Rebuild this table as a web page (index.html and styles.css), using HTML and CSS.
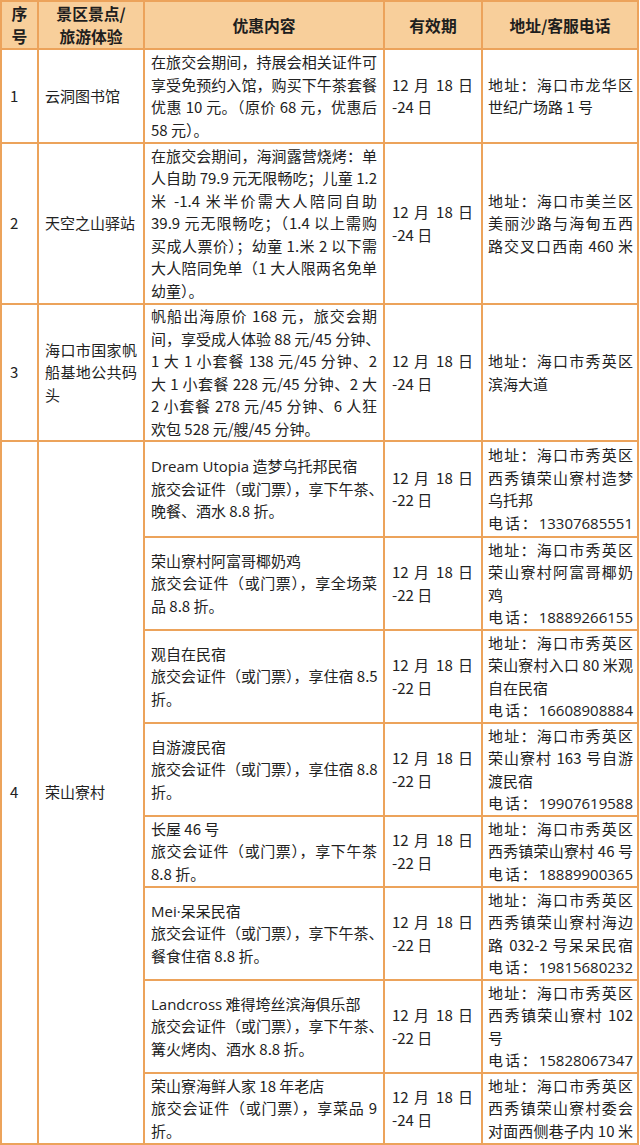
FILE: index.html
```html
<!DOCTYPE html>
<html lang="zh-CN">
<head>
<meta charset="utf-8">
<title>旅交会优惠</title>
<link rel="stylesheet" href="styles.css">
</head>
<body>
<div class="sheet">
  <div class="cell head"><div>序</div><div>号</div></div>
  <div class="cell head"><div>景区景点/</div><div>旅游体验</div></div>
  <div class="cell head"><div>优惠内容</div></div>
  <div class="cell head"><div>有效期</div></div>
  <div class="cell head"><div>地址/客服电话</div></div>

  <div class="cell num"><div>1</div></div>
  <div class="cell name"><div>云洞图书馆</div></div>
  <div class="cell offer">
    <div class="j">在旅交会期间，持展会相关证件可</div>
    <div class="j">享受免预约入馆，购买下午茶套餐</div>
    <div class="j">优惠 10 元。（原价 68 元，优惠后</div>
    <div>58 元）。</div>
  </div>
  <div class="cell date"><div class="j">12 月 18 日</div><div>-24 日</div></div>
  <div class="cell addr"><div class="j">地址：海口市龙华区</div><div>世纪广场路 1 号</div></div>

  <div class="cell num"><div>2</div></div>
  <div class="cell name"><div>天空之山驿站</div></div>
  <div class="cell offer">
    <div class="j">在旅交会期间，海涧露营烧烤：单</div>
    <div class="j">人自助 79.9 元无限畅吃；儿童 1.2</div>
    <div class="j">米 -1.4 米半价需大人陪同自助</div>
    <div class="j">39.9 元无限畅吃；（1.4 以上需购</div>
    <div class="j">买成人票价）；幼童 1.米 2 以下需</div>
    <div class="j">大人陪同免单（1 大人限两名免单</div>
    <div>幼童）。</div>
  </div>
  <div class="cell date"><div class="j">12 月 18 日</div><div>-24 日</div></div>
  <div class="cell addr">
    <div class="j">地址：海口市美兰区</div>
    <div class="j">美丽沙路与海甸五西</div>
    <div class="j">路交叉口西南 460 米</div>
  </div>

  <div class="cell num"><div>3</div></div>
  <div class="cell name"><div class="j">海口市国家帆</div><div class="j">船基地公共码</div><div>头</div></div>
  <div class="cell offer">
    <div class="j">帆船出海原价 168 元，旅交会期</div>
    <div class="j">间，享受成人体验 88 元/45 分钟、</div>
    <div class="j">1 大 1 小套餐 138 元/45 分钟、2</div>
    <div class="j">大 1 小套餐 228 元/45 分钟、2 大</div>
    <div class="j">2 小套餐 278 元/45 分钟、6 人狂</div>
    <div>欢包 528 元/艘/45 分钟。</div>
  </div>
  <div class="cell date"><div class="j">12 月 18 日</div><div>-24 日</div></div>
  <div class="cell addr"><div class="j">地址：海口市秀英区</div><div>滨海大道</div></div>

  <div class="cell num span8"><div>4</div></div>
  <div class="cell name span8"><div>荣山寮村</div></div>

  <div class="cell offer">
    <div><span class="lat">Dream Utopia</span> 造梦乌托邦民宿</div>
    <div class="j">旅交会证件（或门票），享下午茶、</div>
    <div>晚餐、酒水 8.8 折。</div>
  </div>
  <div class="cell date"><div class="j">12 月 18 日</div><div>-22 日</div></div>
  <div class="cell addr">
    <div class="j">地址：海口市秀英区</div>
    <div class="j">西秀镇荣山寮村造梦</div>
    <div>乌托邦</div>
    <div class="j">电话：<span class="lat">13307685551</span></div>
  </div>

  <div class="cell offer">
    <div>荣山寮村阿富哥椰奶鸡</div>
    <div class="j">旅交会证件（或门票），享全场菜</div>
    <div>品 8.8 折。</div>
  </div>
  <div class="cell date"><div class="j">12 月 18 日</div><div>-22 日</div></div>
  <div class="cell addr">
    <div class="j">地址：海口市秀英区</div>
    <div class="j">荣山寮村阿富哥椰奶</div>
    <div>鸡</div>
    <div class="j">电话：<span class="lat">18889266155</span></div>
  </div>

  <div class="cell offer">
    <div>观自在民宿</div>
    <div class="j">旅交会证件（或门票），享住宿 8.5</div>
    <div>折。</div>
  </div>
  <div class="cell date"><div class="j">12 月 18 日</div><div>-22 日</div></div>
  <div class="cell addr">
    <div class="j">地址：海口市秀英区</div>
    <div class="j">荣山寮村入口 80 米观</div>
    <div>自在民宿</div>
    <div class="j">电话：<span class="lat">16608908884</span></div>
  </div>

  <div class="cell offer">
    <div>自游渡民宿</div>
    <div class="j">旅交会证件（或门票），享住宿 8.8</div>
    <div>折。</div>
  </div>
  <div class="cell date"><div class="j">12 月 18 日</div><div>-22 日</div></div>
  <div class="cell addr">
    <div class="j">地址：海口市秀英区</div>
    <div class="j">荣山寮村 163 号自游</div>
    <div>渡民宿</div>
    <div class="j">电话：<span class="lat">19907619588</span></div>
  </div>

  <div class="cell offer">
    <div>长屋 46 号</div>
    <div class="j">旅交会证件（或门票），享下午茶</div>
    <div>8.8 折。</div>
  </div>
  <div class="cell date"><div class="j">12 月 18 日</div><div>-22 日</div></div>
  <div class="cell addr">
    <div class="j">地址：海口市秀英区</div>
    <div class="j">西秀镇荣山寮村 46 号</div>
    <div class="j">电话：<span class="lat">18889900365</span></div>
  </div>

  <div class="cell offer">
    <div><span class="lat">Mei·</span>呆呆民宿</div>
    <div class="j">旅交会证件（或门票），享下午茶、</div>
    <div>餐食住宿 8.8 折。</div>
  </div>
  <div class="cell date"><div class="j">12 月 18 日</div><div>-22 日</div></div>
  <div class="cell addr">
    <div class="j">地址：海口市秀英区</div>
    <div class="j">西秀镇荣山寮村海边</div>
    <div class="j">路 032-2 号呆呆民宿</div>
    <div class="j">电话：<span class="lat">19815680232</span></div>
  </div>

  <div class="cell offer">
    <div><span class="lat">Landcross</span> 难得垮丝滨海俱乐部</div>
    <div class="j">旅交会证件（或门票），享下午茶、</div>
    <div>篝火烤肉、酒水 8.8 折。</div>
  </div>
  <div class="cell date"><div class="j">12 月 18 日</div><div>-22 日</div></div>
  <div class="cell addr">
    <div class="j">地址：海口市秀英区</div>
    <div class="j">西秀镇荣山寮村 102</div>
    <div>号</div>
    <div class="j">电话：<span class="lat">15828067347</span></div>
  </div>

  <div class="cell offer">
    <div>荣山寮海鲜人家 18 年老店</div>
    <div class="j">旅交会证件（或门票），享菜品 9</div>
    <div>折。</div>
  </div>
  <div class="cell date"><div class="j">12 月 18 日</div><div>-24 日</div></div>
  <div class="cell addr">
    <div class="j">地址：海口市秀英区</div>
    <div class="j">西秀镇荣山寮村委会</div>
    <div class="j">对面西侧巷子内 10 米</div>
  </div>
</div>
</body>
</html>
```

FILE: styles.css
```css
* { box-sizing: border-box; }
html, body { margin: 0; padding: 0; background: #ffffff; }
body {
  font-family: "Noto Sans CJK SC", "Noto Sans", sans-serif;
  font-size: 15px;
  line-height: 22.5px;
  color: #222222;
}
.sheet {
  display: grid;
  width: 639px;
  grid-template-columns: 37px 106px 240px 98px 156px;
  grid-template-rows: 48px 94px 161px 137px 96px 93px 93px 93px 71px 93px 93px 71px;
  border-top: 2px solid #eca35b;
  border-left: 2px solid #eca35b;
}
.cell {
  border-right: 2px solid #eca35b;
  border-bottom: 2px solid #eca35b;
  display: flex;
  flex-direction: column;
  justify-content: center;
  min-width: 0;
}
.cell > div { white-space: nowrap; }
.cell > .j { text-align: justify; text-align-last: justify; }
.lat { font-family: "Open Sans", "Noto Sans CJK SC", sans-serif; }
.head {
  background: #f8cf9b;
  align-items: center;
  font-weight: 700;
  font-size: 15.8px;
  line-height: 23px;
  color: #1e1e1e;
}
.num { padding: 0 4px 0 8px; }
.name { padding: 0 6px 0 6px; }
.offer { padding: 0 6px 0 6px; }
.date { padding: 0 8px 0 7px; }
.addr { padding: 0 4px 0 5px; }
.span8 { grid-row: span 8; }
```
